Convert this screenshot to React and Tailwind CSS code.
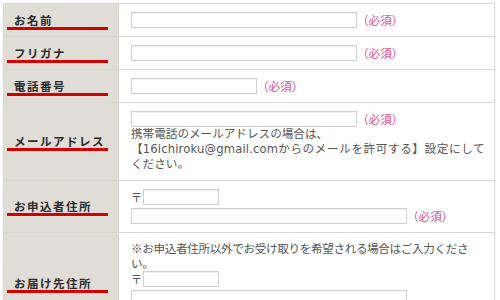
import React from "react";

const font = { fontFamily: '"Noto Sans CJK JP", "Noto Sans", sans-serif' };
const descFont = { fontFamily: '"DejaVu Sans", "Noto Sans CJK JP", sans-serif' };

function Label({ children }) {
  return (
    <div className="flex w-[115px] shrink-0 items-center border-r border-[#d6d3cc] bg-[#e0ddd6] pt-[3px]">
      <div className="ml-[3px] w-[101px] border-b-[3px] border-[#d40000] pl-[7px] text-[11.5px] font-bold leading-[13px] tracking-[1.5px] text-[#2b2b2b]">
        {children}
      </div>
    </div>
  );
}

function Input({ w }) {
  return <div className={`h-[16px] ${w} shrink-0 border border-[#d0d0d0] bg-white shadow-[inset_0_1px_1px_rgba(0,0,0,0.06)]`} />;
}

function Req() {
  return <span className="whitespace-nowrap text-[11.6px] leading-[16px] text-[#e5508a]">（必須）</span>;
}

function Row({ label, children, last }) {
  return (
    <div className={`flex ${last ? "" : "border-b border-[#d8d8d8]"}`}>
      <Label>{label}</Label>
      <div className="w-[375px] bg-white py-[8px] pl-[12px] pr-[13px]">{children}</div>
    </div>
  );
}

export default function App() {
  return (
    <div className="h-[300px] w-[500px] overflow-hidden bg-white" style={font}>
      <div className="ml-[3px] mt-[3px] w-[492px] border border-[#d6d6d6]">
        <Row label="お名前">
          <div className="flex items-center">
            <Input w="w-[226px]" />
            <Req />
          </div>
        </Row>
        <Row label="フリガナ">
          <div className="flex items-center">
            <Input w="w-[226px]" />
            <Req />
          </div>
        </Row>
        <Row label="電話番号">
          <div className="flex items-center">
            <Input w="w-[126px]" />
            <Req />
          </div>
        </Row>
        <Row label="メールアドレス">
          <div className="flex items-center">
            <Input w="w-[226px]" />
            <Req />
          </div>
          <div className="text-[11.6px] leading-[15px] text-[#555]" style={descFont}>
            <div className="whitespace-nowrap">携帯電話のメールアドレスの場合は、</div>
            <div className="whitespace-nowrap">
              <span className="tracking-[0.15px]">【16ichiroku@gmail.com</span>
              <span className="tracking-[0.6px]">からのメールを許可する】設定にして</span>
            </div>
            <div className="whitespace-nowrap">ください。</div>
          </div>
        </Row>
        <Row label="お申込者住所">
          <div className="flex items-center">
            <span className="w-[12px] text-[11px] leading-[16px] text-[#555]">〒</span>
            <Input w="w-[76px]" />
          </div>
          <div className="mt-[3px] flex items-center">
            <Input w="w-[276px]" />
            <Req />
          </div>
        </Row>
        <Row label="お届け先住所" last>
          <div className="text-[11.6px] leading-[15px] tracking-[-0.35px] text-[#555]">
            <div className="whitespace-nowrap">※お申込者住所以外でお受け取りを希望される場合はご入力くださ</div>
            <div className="whitespace-nowrap">い。</div>
          </div>
          <div className="flex items-center">
            <span className="w-[12px] text-[11px] leading-[16px] text-[#555]">〒</span>
            <Input w="w-[76px]" />
          </div>
          <div className="mt-[3px] flex items-center">
            <Input w="w-[276px]" />
          </div>
          <div className="h-[20px]" />
        </Row>
      </div>
    </div>
  );
}
